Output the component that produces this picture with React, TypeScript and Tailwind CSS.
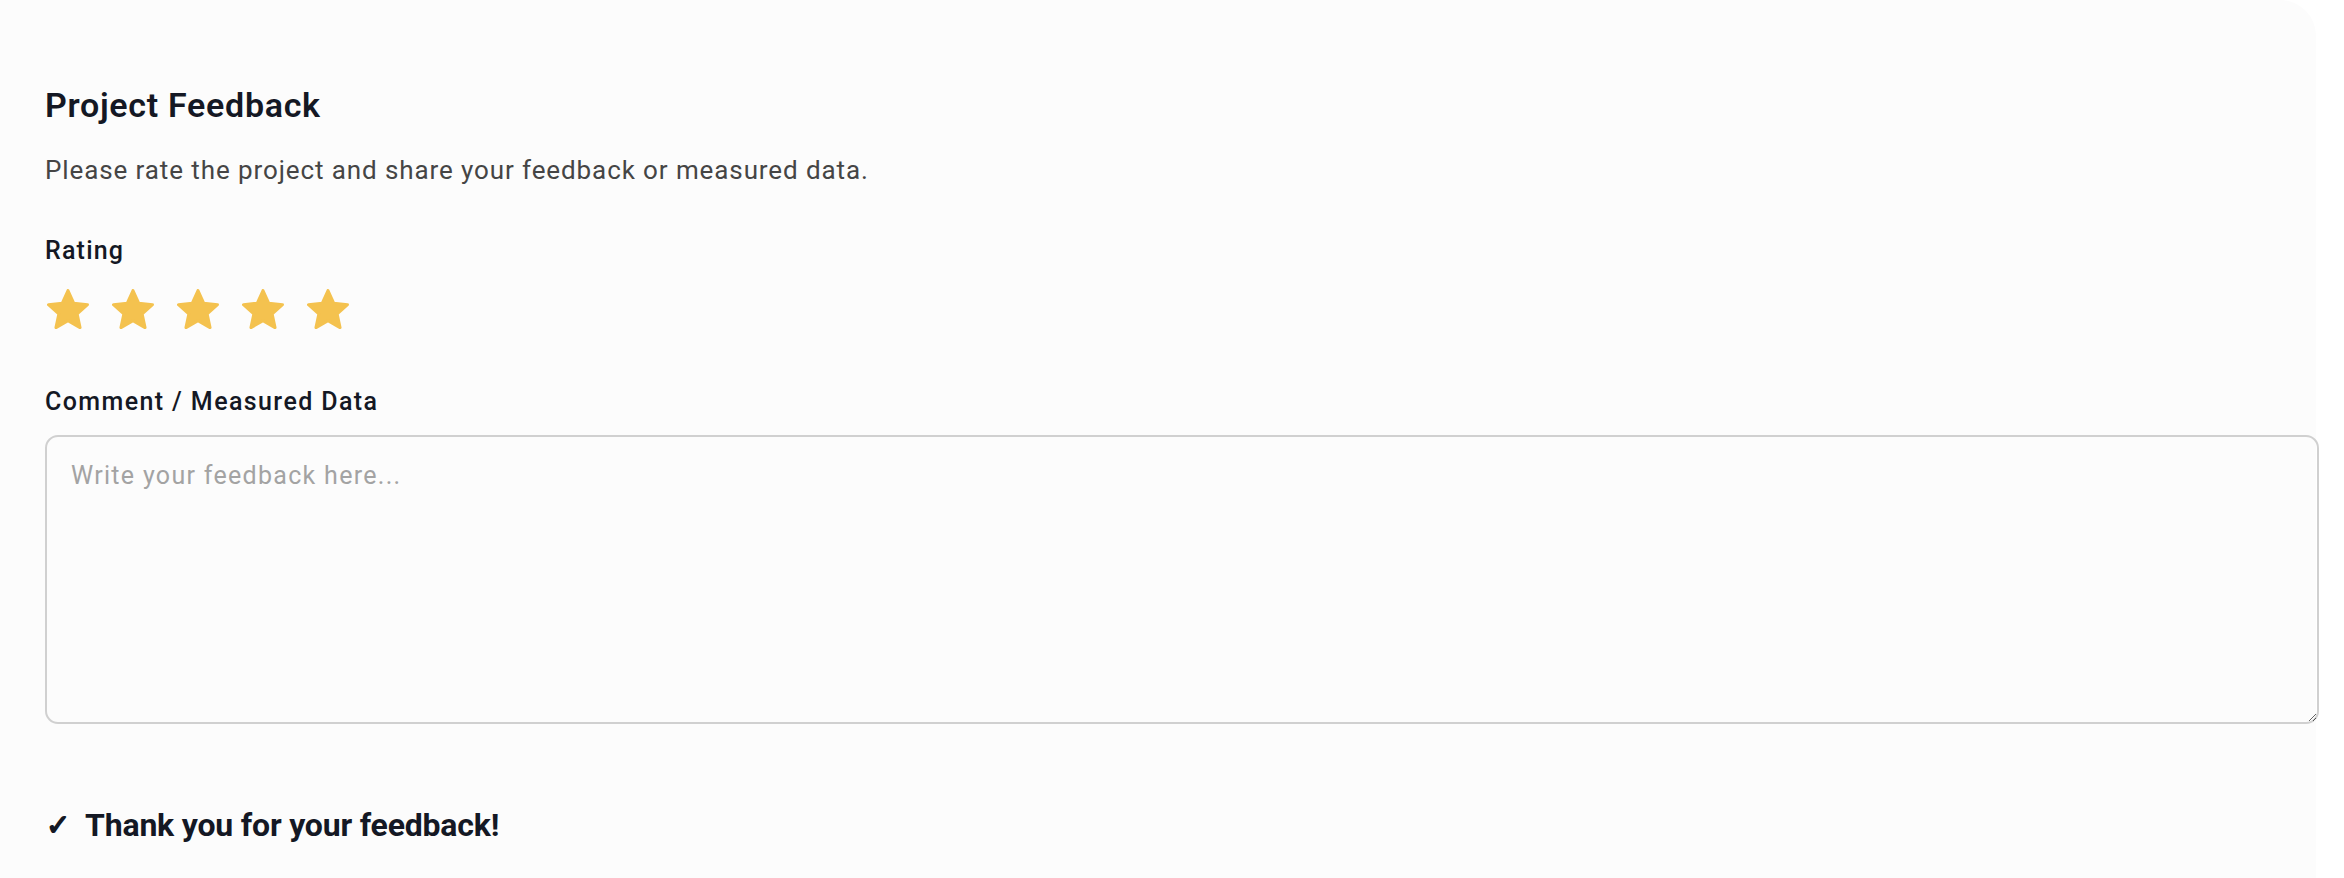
import { useState } from "react";

const Star = () => (
  <svg width="42" height="40" viewBox="0 0 42 40" className="shrink-0">
    <polygon
      points="21,1.5 26.67,14.2 40.5,15.67 30.17,24.98 33.05,38.58 21,31.64 8.95,38.58 11.83,24.98 1.5,15.67 15.33,14.2"
      fill="#f4c24f"
      stroke="#f4c24f"
      strokeWidth="3"
      strokeLinejoin="round"
    />
  </svg>
);

const App = () => {
  const [comment, setComment] = useState("");

  return (
    <div className="min-h-[878px] w-full bg-white font-['Roboto',sans-serif]">
      <div className="min-h-[878px] w-[2316px] rounded-tr-[36px] bg-[#fcfcfc] pl-[45px] pt-[85px]">
        <h2 className="text-[34px] leading-[40px] font-semibold tracking-[0.7px] text-[#141824]">
          Project Feedback
        </h2>
        <p className="mt-[29px] text-[26px] leading-[32px] tracking-[0.9px] text-[#454545]">
          Please rate the project and share your feedback or measured data.
        </p>

        <div className="mt-[50px] text-[25px] leading-[30px] font-medium tracking-[1.2px] text-[#141824]">
          Rating
        </div>
        <div className="mt-[23px] flex gap-[23px] pl-[2px]">
          {[1, 2, 3, 4, 5].map((n) => (
            <Star key={n} />
          ))}
        </div>

        <label className="mt-[58px] block text-[25px] leading-[30px] font-medium tracking-[1.4px] text-[#141824]">
          Comment / Measured Data
        </label>
        <textarea
          value={comment}
          onChange={(e) => setComment(e.target.value)}
          placeholder="Write your feedback here..."
          className="mt-[18px] block h-[289px] w-[2274px] rounded-[13px] border-2 border-[#d0d0d0] bg-transparent px-6 py-6 text-[25px] leading-[30px] tracking-[1.3px] text-[#222] outline-none placeholder:text-[#a3a3a3]"
        />

        <div className="mt-[82px] flex items-center text-[32px] leading-[38px] font-bold tracking-[-0.2px] text-[#141824]">
          <span className="mr-[15px] ml-[1px] font-['DejaVu_Sans',sans-serif] text-[29px] font-bold [-webkit-text-stroke:1.5px_#141824]">
            ✓
          </span>
          <span>Thank you for your feedback!</span>
        </div>
      </div>
    </div>
  );
};

export default App;
